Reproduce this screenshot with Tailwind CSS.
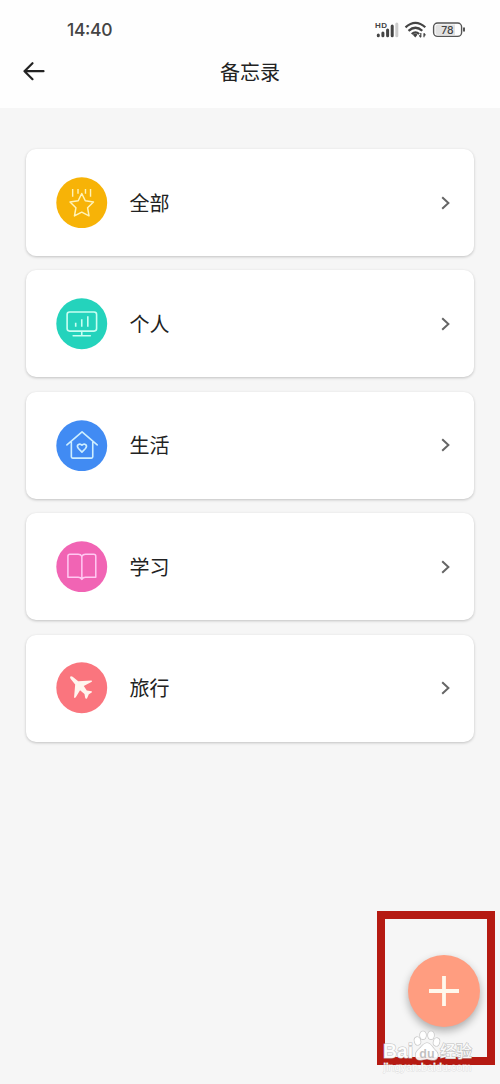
<!DOCTYPE html>
<html lang="zh-CN">
<head>
<meta charset="utf-8">
<title>备忘录</title>
<script src="https://cdn.jsdelivr.net/npm/@tailwindcss/browser@4"></script>
</head>
<body class="bg-[#f6f6f6]">
<div class="relative w-[500px] h-[1084px] overflow-hidden bg-[#f6f6f6] font-['Liberation_Sans','Noto_Sans_CJK_SC',sans-serif] text-[#222]">
  <header class="h-[108px] bg-[#fefefe]">
    <div class="flex h-[46px] items-start justify-between pl-[67px] pr-[34px] pt-[18px]">
      <svg class="overflow-visible" width="60" height="24" viewBox="0 0 60 24"><text x="0" y="18.3" font-family="Inter, sans-serif" font-size="17.5" font-weight="500" fill="#444" textLength="45.5">14:40</text></svg>
      <svg class="-mt-[1px]" width="92" height="24" viewBox="374 17 92 24" fill="none">
        <text x="375" y="27.5" font-family="Liberation Sans" font-size="8" font-weight="700" fill="#444" textLength="12">HD</text>
        <g stroke-width="3" stroke-linecap="round" stroke="#444"><path d="M378.3 35v.8M382.9 33v2.8M387.6 30v5.8M392.2 26v9.8"/><path stroke="#ccc" d="M396.8 24v11.8"/></g>
        <g stroke="#444" stroke-width="2.2"><path d="M405.5 27.3Q415.5 18.5 425.3 27.3M408.5 30.8Q415.5 24.7 422.3 30.8M411.7 34Q415.5 30.8 419.2 34"/></g>
        <path d="M412.8 34.7Q415.5 32.5 417.5 34.7L415.3 37.5Z" fill="#444"/>
        <path d="M420.8 33v4M419.3 35.3l1.5 2M424 37.3v-4M424 33.3l1.4 2" stroke="#444" stroke-width="1.2"/>
        <rect x="433.6" y="23" width="28" height="13.4" rx="4" fill="#fefefe" stroke="#555" stroke-width="1.4"/>
        <path d="M438 24.5h17v10.4h-17a2.5 2.5 0 0 1-2.5-2.5v-5.4a2.5 2.5 0 0 1 2.5-2.5z" fill="#e2e2e2"/>
        <path d="M464 27.5v4" stroke="#444" stroke-width="1.8"/>
        <text x="447.5" y="33.7" text-anchor="middle" font-family="Inter, sans-serif" font-size="10.5" font-weight="500" fill="#444">78</text>
      </svg>
    </div>
    <div class="grid grid-cols-[100px_300px_100px] h-[52px] items-center">
      <svg class="ml-[22px]" width="24" height="22" viewBox="0 0 24 22" fill="none" stroke="#222" stroke-width="2.2" stroke-linecap="round" stroke-linejoin="round"><path d="M21.5 10.2H2.5M10.5 2.2L2.5 10.2L10.5 18.2"/></svg>
      <h1 class="pt-[2px] text-center text-[20px] leading-[30px]">备忘录</h1>
    </div>
  </header>

  <main class="flex flex-col gap-[14.4px] px-[26px] pt-[41px]">
    <div class="flex h-[107px] items-center rounded-[10px] bg-white pl-[30px] pr-[22px] shadow-[0_1px_3px_rgba(0,0,0,0.22)]">
      <svg width="51.5" height="51.5" viewBox="0 0 51 51" fill="none" stroke="#fff3b8" stroke-width="1.5" stroke-linejoin="round"><circle cx="25.5" cy="25.5" r="25.2" fill="#f7b307" stroke="none"/><path d="M25.5 16.3L29 23.5L37.1 24.7L31.3 30.5L32.7 38.5L25.5 34.8L18.3 38.5L19.7 30.5L13.9 24.7L22 23.5Z"/><path stroke-width="1.4" d="M16.5 12v7.5M21.8 12v4.5M29.2 12v4.5M34.2 12v7.5"/></svg>
      <span class="ml-[22px] flex-1 pt-[2px] text-[20px] leading-[30px]">全部</span>
      <svg width="12" height="16" viewBox="0 0 12 16" fill="none" stroke="#666" stroke-width="2"><path d="M2.2 2.2L8.4 8L2.2 13.8"/></svg>
    </div>
    <div class="flex h-[107px] items-center rounded-[10px] bg-white pl-[30px] pr-[22px] shadow-[0_1px_3px_rgba(0,0,0,0.22)]">
      <svg width="51.5" height="51.5" viewBox="0 0 51 51" fill="none" stroke="#c8fff2" stroke-width="1.6"><circle cx="25.5" cy="25.5" r="25.2" fill="#24d3bc" stroke="none"/><rect x="11" y="13.8" width="29.2" height="19" rx="2.5"/><path d="M19.5 28.5v-4M25.5 28.5v-7.5M31.5 28.5v-10.5M25.5 33v4"/><path stroke-linecap="round" d="M17 37.4h17"/></svg>
      <span class="ml-[22px] flex-1 pt-[2px] text-[20px] leading-[30px]">个人</span>
      <svg width="12" height="16" viewBox="0 0 12 16" fill="none" stroke="#666" stroke-width="2"><path d="M2.2 2.2L8.4 8L2.2 13.8"/></svg>
    </div>
    <div class="flex h-[107px] items-center rounded-[10px] bg-white pl-[30px] pr-[22px] shadow-[0_1px_3px_rgba(0,0,0,0.22)]">
      <svg width="51.5" height="51.5" viewBox="0 0 51 51" fill="none" stroke="#cdeeff" stroke-width="1.6" stroke-linecap="round" stroke-linejoin="round"><circle cx="25.5" cy="25.5" r="25.2" fill="#418bf3" stroke="none"/><path d="M10.8 24.7L25.8 11.7L40.8 24.7M15.2 22v14.5q0 1.3 1.3 1.3h18.6q1.3 0 1.3-1.3V22"/><path d="M25.7 31.8L22.2 28.2Q20.3 26 22 24.4Q24 23 25.7 25Q27.4 23 29.4 24.4Q31.1 26 29.2 28.2Z"/></svg>
      <span class="ml-[22px] flex-1 pt-[2px] text-[20px] leading-[30px]">生活</span>
      <svg width="12" height="16" viewBox="0 0 12 16" fill="none" stroke="#666" stroke-width="2"><path d="M2.2 2.2L8.4 8L2.2 13.8"/></svg>
    </div>
    <div class="flex h-[107px] items-center rounded-[10px] bg-white pl-[30px] pr-[22px] shadow-[0_1px_3px_rgba(0,0,0,0.22)]">
      <svg width="51.5" height="51.5" viewBox="0 0 51 51" fill="none" stroke="#ffc9f2" stroke-width="1.5" stroke-linejoin="round"><circle cx="25.5" cy="25.5" r="25.2" fill="#f164b4" stroke="none"/><path d="M25.6 15.2Q24.6 13.2 22 13.2H13.8Q11.8 13.2 11.8 15.2V36H22Q24.7 36 25.6 38Q26.5 36 29.2 36H39.4V15.2Q39.4 13.2 37.4 13.2H29.2Q26.6 13.2 25.6 15.2V38"/></svg>
      <span class="ml-[22px] flex-1 pt-[2px] text-[20px] leading-[30px]">学习</span>
      <svg width="12" height="16" viewBox="0 0 12 16" fill="none" stroke="#666" stroke-width="2"><path d="M2.2 2.2L8.4 8L2.2 13.8"/></svg>
    </div>
    <div class="flex h-[107px] items-center rounded-[10px] bg-white pl-[30px] pr-[22px] shadow-[0_1px_3px_rgba(0,0,0,0.22)]">
      <svg width="51.5" height="51.5" viewBox="0 0 51 51"><circle cx="25.5" cy="25.5" r="25.2" fill="#fa757e"/><path d="M14.2 14.3Q15.3 13.7 16.5 14.7L22 19L35.2 18.2Q36.5 18.7 35 19.9L27.5 23.8L30.5 28.2L35.3 28.9Q36.2 29.6 35 30.4L32.5 32L30.8 35.8Q29.5 37 28.9 35.5L28.2 31.6L23.8 28L19.6 35Q18 36.3 17.9 34.7L19 22.3L14.6 16.8Q13.5 15.4 14.2 14.3Z" fill="#fff5ee"/></svg>
      <span class="ml-[22px] flex-1 pt-[2px] text-[20px] leading-[30px]">旅行</span>
      <svg width="12" height="16" viewBox="0 0 12 16" fill="none" stroke="#666" stroke-width="2"><path d="M2.2 2.2L8.4 8L2.2 13.8"/></svg>
    </div>
  </main>

  <!-- floating add button -->
  <button class="absolute left-[408px] top-[955px] flex size-[72px] items-center justify-center rounded-full bg-[#ff9d80] shadow-[0_4px_9px_rgba(0,0,0,0.3)]">
    <svg width="32" height="32" viewBox="0 0 32 32" stroke="#fff8ec" stroke-width="3.8"><path d="M16 1v30M1 16h30"/></svg>
  </button>
  <div class="absolute left-[377px] top-[911px] h-[154px] w-[118px] border-8 border-[#b51a12]"></div>

  <!-- watermark -->
  <svg class="absolute left-[375px] top-[1024px]" width="110" height="56" viewBox="375 1024 110 56" fill="#fff" fill-opacity=".92" stroke="#bbb" stroke-opacity=".9" stroke-width="1.2" paint-order="stroke">
    <text x="383" y="1058" font-family="Liberation Sans" font-size="20" font-weight="700" textLength="30" lengthAdjust="spacingAndGlyphs">Bai</text>
    <ellipse cx="417.5" cy="1041" rx="3" ry="4" transform="rotate(-15 417.5 1041)"/>
    <ellipse cx="423" cy="1035.3" rx="3" ry="4"/>
    <ellipse cx="431" cy="1035.3" rx="3" ry="4"/>
    <ellipse cx="436.5" cy="1042" rx="3" ry="4" transform="rotate(15 436.5 1042)"/>
    <path d="M427 1043C431 1043 432 1047 435 1050C440 1054 438 1060 433 1060C430 1060 429 1059 427 1059C424 1059 423 1060 420 1060C415 1060 414 1054 418 1050C422 1047 423 1043 427 1043Z"/>
    <text x="427" y="1057.5" text-anchor="middle" font-family="Liberation Sans" font-size="12.5" font-weight="700" fill="#bbb" stroke="none">du</text>
    <text x="440" y="1057" font-family="Noto Sans CJK SC, sans-serif" font-size="16" font-weight="500">经验</text>
    <text x="383.5" y="1070.5" font-family="Liberation Sans" font-size="11" stroke="#ddd" stroke-width="1" textLength="88">jingyan.baidu.com</text>
  </svg>
</div>
</body>
</html>
